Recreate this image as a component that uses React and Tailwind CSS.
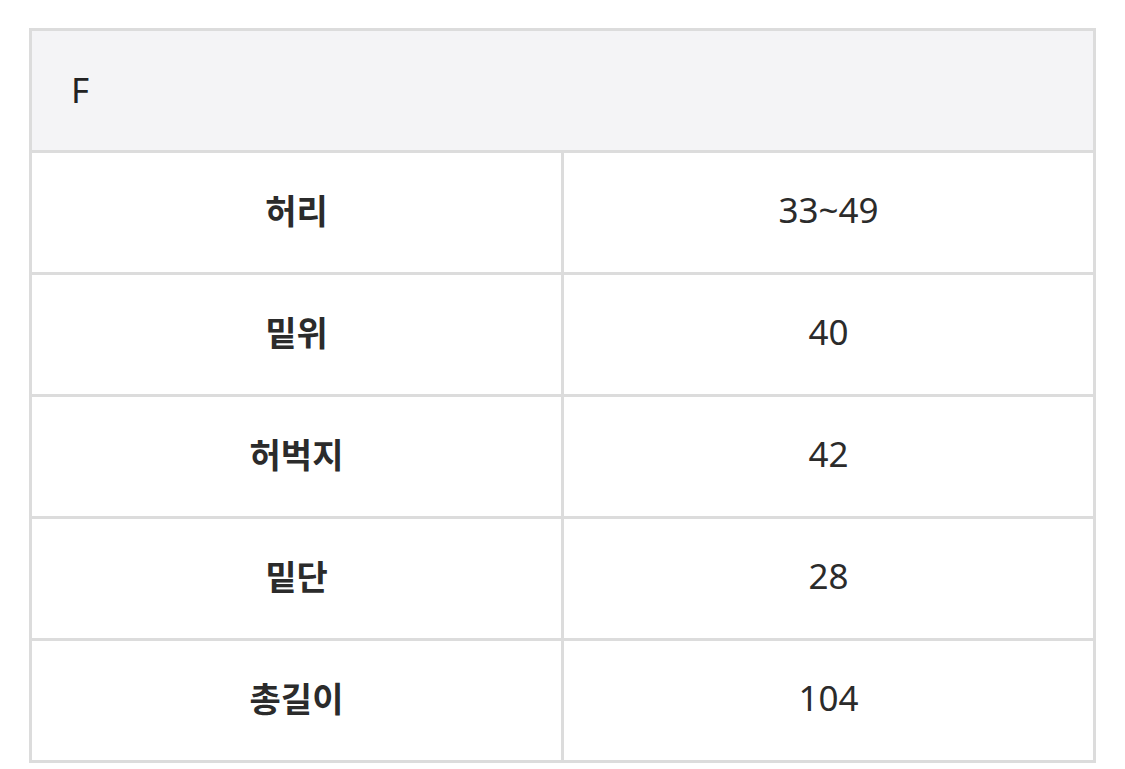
import React from "react";

const rows = [
  ["허리", "33~49"],
  ["밑위", "40"],
  ["허벅지", "42"],
  ["밑단", "28"],
  ["총길이", "104"],
];

export default function App() {
  return (
    <div
      className="min-h-[769px] bg-white pt-[28px] pl-[29px]"
      style={{ fontFamily: '"Noto Sans", "Noto Sans CJK KR", sans-serif' }}
    >
      <div className="w-[1067px] border-[3px] border-[#dcdcdc]">
        <div className="h-[122px] bg-[#f4f4f6] border-b-[3px] border-[#dcdcdc] flex items-center pl-[39px] text-[35px] text-[#222222] leading-none pb-[2px]">
          F
        </div>
        {rows.map(([k, v], i) => (
          <div
            key={k}
            className={
              "grid grid-cols-[532px_1fr] h-[119px] box-content " +
              (i < rows.length - 1 ? "border-b-[3px] border-[#dcdcdc]" : "")
            }
          >
            <div className="border-r-[3px] border-[#dcdcdc] flex items-center justify-center text-[34px] font-bold text-[#2b2b2b] leading-none pb-[4px]">
              {k}
            </div>
            <div className="flex items-center justify-center text-[35px] text-[#2b2b2b] leading-none pb-[6px]">
              {v}
            </div>
          </div>
        ))}
      </div>
    </div>
  );
}
